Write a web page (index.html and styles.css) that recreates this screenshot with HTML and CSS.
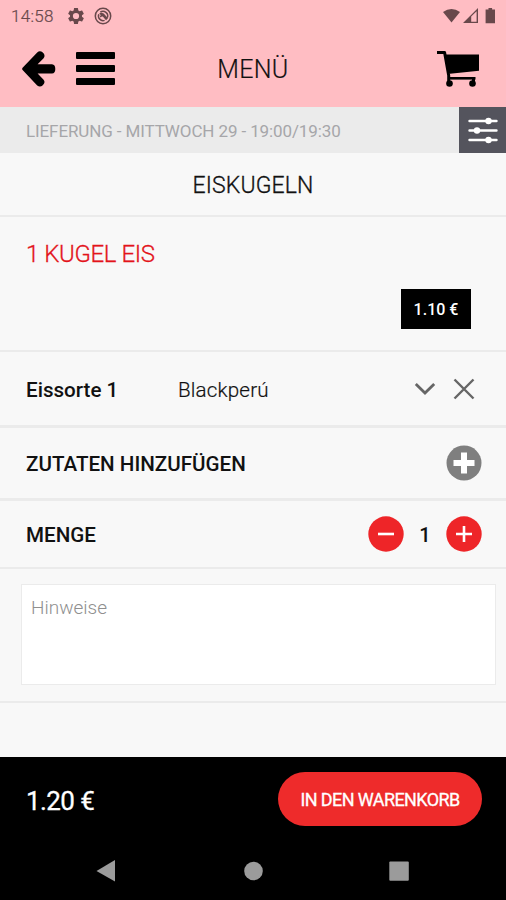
FILE: index.html
```html
<!DOCTYPE html>
<html lang="de">
<head>
<meta charset="utf-8">
<title>Menü</title>
<link rel="stylesheet" href="styles.css">
</head>
<body>
<div class="statusbar">
  <span class="clock">14:58</span>
  <svg class="gear" width="16" height="16" viewBox="2 2 20 20"><path fill="currentColor" fill-rule="evenodd" d="M19.43 12.98c.04-.32.07-.64.07-.98s-.03-.66-.07-.98l2.11-1.65c.19-.15.24-.42.12-.64l-2-3.46c-.12-.22-.39-.3-.61-.22l-2.49 1c-.52-.4-1.080-.73-1.690-.98l-.38-2.650A.49.49 0 0 0 14 2h-4c-.25 0-.46.18-.49.42l-.38 2.650c-.61.25-1.170.59-1.690.98l-2.490-1c-.23-.09-.49 0-.61.22l-2 3.460c-.13.22-.07.49.12.64l2.110 1.650c-.04.32-.07.65-.07.98s.03.66.07.98l-2.110 1.650c-.19.15-.24.42-.12.64l2 3.460c.12.22.39.3.61.22l2.490-1c.52.4 1.080.73 1.690.98l.38 2.650c.03.24.24.42.49.42h4c.25 0 .46-.18.49-.42l.38-2.650c.61-.25 1.170-.59 1.690-.98l2.490 1c.23.09.49 0 .61-.22l2-3.460c.12-.22.07-.49-.12-.64zM12 15.900a3.900 3.900 0 1 1 0-7.800 3.900 3.900 0 0 1 0 7.800z"/></svg>
  <svg class="sync" width="18" height="18" viewBox="0 0 18 18" fill="none" stroke="currentColor"><circle cx="9" cy="9" r="7.700" stroke-width="1.500"/><path stroke-width="1.500" d="M4.800 7.200A4.700 4.700 0 0 0 10.600 13.400M6.300 5.100A4.700 4.700 0 0 1 13.300 10.800"/><path fill="currentColor" stroke="none" d="M5.200 6.300Q9.300 4.600 11.500 8.500L14 11.200L12 13.200L8.800 9.600Q7.400 9.400 6.400 10.400Q5.200 9 6.800 8.200z"/></svg>
  <span class="spacer"></span>
  <svg width="56" height="18" viewBox="0 0 56 18"><path fill="currentColor" d="M1 5Q9.500-1.200 18 5L9.500 15.500z"/><path fill="currentColor" d="M21 16L36 1V16zM29.200 9.400V14.800H34.600V4.200z" fill-rule="evenodd"/><path fill="currentColor" d="M46.500 1h3.600v1.500H53V16.200h-9.400V2.500h2.900z"/></svg>
</div>
<header class="header">
  <svg width="34" height="36" viewBox="0 0 34 36"><path d="M0.600 16.800L15.200 1.400Q18-0.900 20.800 1.600Q23.800 4.300 21.600 7.200L15.600 13.200H30Q33.300 13.600 33.300 17.900Q33.300 22.200 30 22.600H15.600L21.600 28.700Q23.800 31.600 20.800 34.300Q18 36.800 15.200 34.500L0.600 19.100Q-0.300 18 0.600 16.800z"/></svg>
  <div class="burger"><i></i><i></i><i></i></div>
  <h1>MENÜ</h1>
  <svg class="cart" width="44" height="38" viewBox="0 0 44 38"><path fill="none" stroke="#000" stroke-width="3" stroke-linejoin="round" d="M1 2.500H8.600L12.700 25.500V31"/><path d="M8.600 4.600H43V20.800L14 23.800L12.200 23z"/><path d="M12 27H39.500V29.600H12z"/><circle cx="13.500" cy="33.500" r="3.300"/><circle cx="36.500" cy="33.500" r="3.300"/><path d="M36 28h3v5H36z"/></svg>
</header>
<div class="slot">
  <span>LIEFERUNG - MITTWOCH 29 - 19:00/19:30</span>
  <div class="filter"><svg width="30" height="27" viewBox="0 0 30 27" stroke="#fff" stroke-width="2.400" stroke-linecap="round" fill="#fff"><path d="M1.500 4H28.500M1.500 13.500H28.500M1.500 23H28.500"/><g stroke="none"><circle cx="20.500" cy="4" r="3.200"/><circle cx="9" cy="13.500" r="3.200"/><circle cx="20.500" cy="23" r="3.200"/></g></svg></div>
</div>
<main>
  <h2 class="category">EISKUGELN</h2>
  <section class="product">
    <h3>1 KUGEL EIS</h3>
    <div class="price">1.10 €</div>
  </section>
  <section class="row flavour">
    <span class="label">Eissorte 1</span>
    <span class="value">Blackperú</span>
    <svg class="chevron" width="22" height="14" viewBox="0 0 22 14" fill="none" stroke="#666" stroke-width="2.800"><path d="M1.800 2L11 11L20.200 2"/></svg>
    <svg class="close" width="22" height="22" viewBox="0 0 22 22" fill="none" stroke="#666" stroke-width="2.400"><path d="M1.500 1.500L20.500 20.500M20.500 1.500L1.500 20.500"/></svg>
  </section>
  <section class="row extras">
    <span class="label">ZUTATEN HINZUFÜGEN</span>
    <svg class="end" width="36" height="36" viewBox="0 0 36 36"><circle cx="18" cy="18" r="17.500" fill="#7f7f7f"/><path stroke="#fff" stroke-width="6" d="M18 7.500V28.500M7.500 18H28.500"/></svg>
  </section>
  <section class="row amount">
    <span class="label">MENGE</span>
    <svg class="end" width="36" height="36" viewBox="0 0 36 36"><circle cx="18" cy="18" r="17.700" fill="#ee2528"/><path stroke="#fff" stroke-width="2.600" d="M10 18H26"/></svg>
    <span class="count">1</span>
    <svg width="36" height="36" viewBox="0 0 36 36"><circle cx="18" cy="18" r="17.700" fill="#ee2528"/><path stroke="#fff" stroke-width="2.600" d="M10 18H26M18 10V26"/></svg>
  </section>
  <section class="notes"><div class="field">Hinweise</div></section>
</main>
<footer class="footer">
  <div class="checkout">
    <span class="total">1.20 €</span>
    <div class="button"><span>IN DEN WARENKORB</span></div>
  </div>
  <svg class="nav" width="506" height="60" viewBox="0 0 506 60" fill="#9b9b9b"><path d="M96.500 31L115 20V41.500z"/><circle cx="253.500" cy="31" r="9.300"/><rect x="389.300" y="21.500" width="19.500" height="19.300" rx="1"/></svg>
</footer>
</body>
</html>
```
FILE: styles.css
```css
* { box-sizing: border-box; }
body {
  margin: 0;
  width: 506px;
  height: 900px;
  display: flex;
  flex-direction: column;
  overflow: hidden;
  background: #f8f8f8;
  color: #111;
  font-family: Roboto, "Liberation Sans", sans-serif;
}
h1, h2, h3 { margin: 0; font-weight: 300; }
svg { display: block; flex: none; }
span, h1, h2, h3 { white-space: nowrap; }
.statusbar {
  height: 31px;
  flex: none;
  display: flex;
  align-items: center;
  padding: 0 8px 0 11px;
  background: #ffbdc3;
  color: #68484b;
}
.clock { font-size: 17px; font-weight: 300; width: 57px; letter-spacing: 0.3px; -webkit-text-stroke: 0.2px; }
.sync { margin-left: 10px; }
.spacer { flex: 1; }
.header {
  height: 76px;
  flex: none;
  display: grid;
  grid-template-columns: 34px 39px 1fr 44px;
  align-items: center;
  padding: 0 26px 0 22px;
  column-gap: 20px;
  background: #ffbdc3;
}
.burger { display: flex; flex-direction: column; gap: 6.500px; margin: -1px 0 0 0; }
.burger i { height: 6.500px; background: #000; border-radius: 1px; }
h1 { font-size: 25px; text-align: center; line-height: 30px; padding: 1px 45px 0 0; letter-spacing: 0.3px; -webkit-text-stroke: 0.2px; }
.slot {
  height: 46px;
  flex: none;
  display: flex;
  align-items: center;
  justify-content: space-between;
  padding-left: 26px;
  background: #ebebeb;
  color: #a6a6a9;
  font-size: 17px;
  letter-spacing: -0.110px;
}
.slot span { padding-top: 2px; }
.filter {
  width: 47px;
  height: 46px;
  display: flex;
  align-items: center;
  justify-content: center;
  background: #54545d;
}
main { flex: 1; }
.category {
  height: 64px;
  border-bottom: 2px solid #ebebeb;
  font-size: 23px;
  line-height: 65px;
  text-align: center;
  letter-spacing: 0.150px;
  -webkit-text-stroke: 0.3px;
}
.product {
  height: 135px;
  padding: 22px 35px 0 26px;
  border-bottom: 2px solid #ebebeb;
}
.product h3 { font-size: 24px; line-height: 30px; color: #e3141b; letter-spacing: -0.400px; -webkit-text-stroke: 0.3px; }
.price {
  width: 70px;
  height: 40px;
  margin: 20px 0 0 auto;
  background: #000;
  color: #fff;
  font-size: 16px;
  font-weight: 500;
  line-height: 42px;
  text-align: center;
}
.row {
  display: flex;
  align-items: center;
  padding: 0 24px 0 26px;
  border-bottom: 3px solid #ebebeb;
  font-size: 20.600px;
}
.label { font-weight: 500; padding-top: 2px; }
.flavour { height: 76px; }
.flavour .label { width: 152px; }
.value { font-weight: 300; letter-spacing: 0.150px; padding-top: 2px; -webkit-text-stroke: 0.2px; }
.chevron { margin-left: auto; }
.close { margin: 0 7px 0 17px; }
.extras { height: 73px; }
.amount { height: 68px; border-bottom-width: 2px; }
.end { margin-left: auto; }
.count { width: 42px; text-align: center; font-size: 20px; font-weight: 500; padding-top: 2px; }
.notes { height: 134px; padding: 15px 10px 0 21px; border-bottom: 2px solid #ebebeb; }
.field {
  height: 101px;
  padding: 9px 9px;
  background: #fff;
  border: 1px solid #ebebeb;
  color: #8f8f8f;
  font-size: 19px;
  font-weight: 300;
  line-height: 28px;
}
.footer { height: 143px; flex: none; background: #000; color: #fff; }
.checkout {
  height: 83px;
  display: flex;
  align-items: center;
  justify-content: space-between;
  padding: 0 24px 0 26px;
}
.total { font-size: 26px; padding-top: 4px; letter-spacing: -0.600px; -webkit-text-stroke: 0.3px; }
.button {
  width: 204px;
  height: 54px;
  border-radius: 27px;
  background: #ee2b2b;
  font-size: 18px;
  line-height: 56px;
  text-align: center;
  letter-spacing: -0.600px;
  -webkit-text-stroke: 0.3px;
}
```
